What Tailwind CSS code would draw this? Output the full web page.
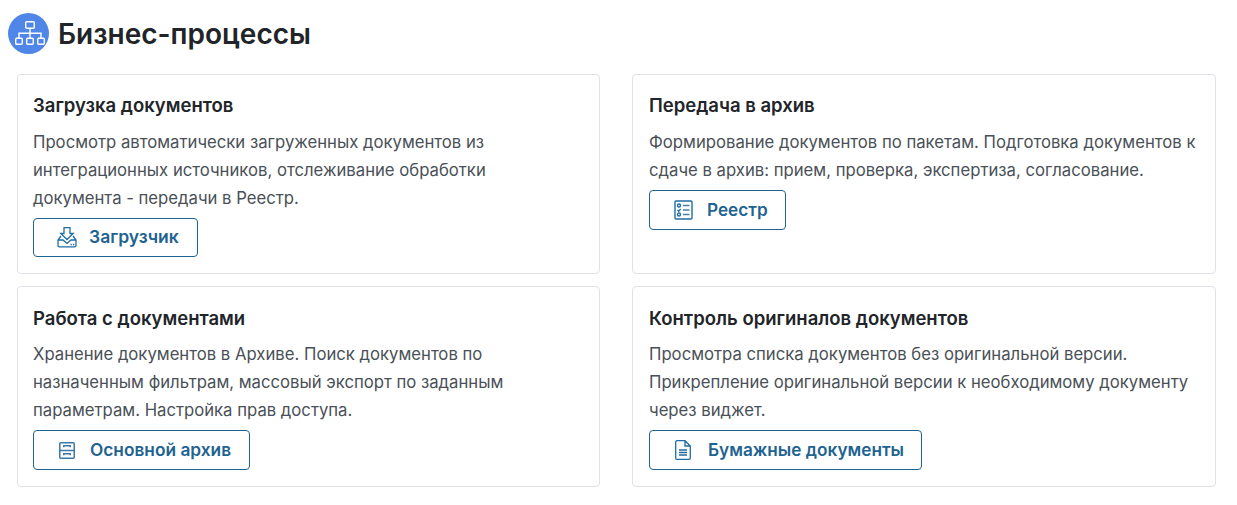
<!DOCTYPE html>
<html lang="ru"><head><meta charset="utf-8"><script src="https://cdn.jsdelivr.net/npm/@tailwindcss/browser@4"></script></head>
<body class="bg-white font-['Inter','Noto_Sans',sans-serif] text-[#212529] w-[1237px] h-[505px] overflow-hidden">
<div class="flex items-center gap-[9px] pl-[8px] pt-[13px] h-[54px]">
<div class="w-[41px] h-[41px] rounded-full bg-[#4f86e7] flex items-center justify-center">
<svg width="32" height="26" viewBox="-2 0 32 26" fill="none" stroke="#fff" stroke-width="1.4"><rect x="10.700" y="0.700" width="8.600" height="6.600" rx="1"/><rect x="0.700" y="17.200" width="6.600" height="6.100" rx="1"/><rect x="11.700" y="17.200" width="6.600" height="6.100" rx="1"/><rect x="22.700" y="17.200" width="6.600" height="6.100" rx="1"/><path d="M15 7.300v9.900M4 17.200v-5h22v5"/></svg></div>
<h1 class="text-[28px] font-[580] leading-[40px]">Бизнес-процессы</h1></div>
<div class="grid grid-cols-[583px_584px] grid-rows-[200px_201px] gap-x-[32px] gap-y-[12px] ml-[17px] mt-[20px]">
<section class="border border-[#dee2e6] rounded-[4px] pl-[15px] pr-[16px] pt-[19px]"><h2 class="text-[18.500px] font-[580] leading-[22px]">Загрузка документов</h2><p class="mt-[12px] max-w-[500px] text-[16.700px] leading-[28px] text-[#495057]">Просмотр автоматически загруженных документов из интеграционных источников, отслеживание обработки документа - передачи в Реестр.</p><a class="mt-[6px] inline-flex items-center h-[39px] pl-[23px] pr-[18px] gap-[12px] border border-[#1f6391] rounded-[4px] text-[#1f6391] font-semibold text-[17.500px]"><svg width="20" height="21" viewBox="0 0 20 21" fill="none" stroke="#1f6ea3" stroke-width="1.300"><path d="M7 .700h6v5.800h3.200L10 12.500 3.800 6.500H7zM4 9 1 13v5.500a1.300 1.300 0 0 0 1.300 1.300h15.400a1.300 1.300 0 0 0 1.300-1.300V13l-3-4M1 13h5l4 3.500 4-3.500h5"/><path d="M13.500 17.500h1.300M16 17.500h1.300"/></svg>Загрузчик</a></section>
<section class="border border-[#dee2e6] rounded-[4px] pl-[16px] pr-[16px] pt-[19px]"><h2 class="text-[18.500px] font-[580] leading-[22px]">Передача в архив</h2><p class="mt-[12px] text-[16.700px] leading-[28px] text-[#495057]">Формирование документов по пакетам. Подготовка документов к сдаче в архив: прием, проверка, экспертиза, согласование.</p><a class="mt-[6px] inline-flex items-center h-[40px] pl-[24px] pr-[17px] gap-[14px] border border-[#1f6391] rounded-[4px] text-[#1f6391] font-semibold text-[17.200px]"><svg width="19" height="20" viewBox="0 0 19 20" fill="none" stroke="#1f6ea3" stroke-width="1.400"><rect x="1" y="1" width="17" height="18" rx="1"/><circle cx="5" cy="5.500" r="1.500"/><circle cx="5" cy="14.500" r="1.500"/><path d="M3.500 10l1.200 1.200L6.700 9"/><path d="M9 5.500h6.500M9 10h6.500M9 14.500h6.500" stroke="#4a7fa8"/></svg>Реестр</a></section>
<section class="border border-[#dee2e6] rounded-[4px] pl-[15px] pr-[16px] pt-[20px]"><h2 class="text-[18.500px] font-[580] leading-[22px]">Работа с документами</h2><p class="mt-[11px] text-[16.700px] leading-[28px] text-[#495057]">Хранение документов в Архиве. Поиск документов по назначенным фильтрам, массовый экспорт по заданным параметрам. Настройка прав доступа.</p><a class="mt-[6px] inline-flex items-center h-[40px] pl-[25px] pr-[18px] gap-[15px] border border-[#1f6391] rounded-[4px] text-[#1f6391] font-semibold text-[17.300px]"><svg width="16" height="17" viewBox="0 0 16 17" fill="none" stroke="#3f78a8" stroke-width="1.500"><rect x="0.750" y="0.750" width="14.500" height="15.500" rx="1"/><path d="M0.750 8.500h14.500M4.800 5.200V3.800h6.400v1.400M4.800 13.200v-1.400h6.400v1.400"/></svg>Основной архив</a></section>
<section class="border border-[#dee2e6] rounded-[4px] pl-[16px] pr-[16px] pt-[20px]"><h2 class="text-[18.500px] font-[580] leading-[22px]">Контроль оригиналов документов</h2><p class="mt-[11px] text-[16.700px] leading-[28px] text-[#495057]">Просмотра списка документов без оригинальной версии. Прикрепление оригинальной версии к необходимому документу через виджет.</p><a class="mt-[6px] inline-flex items-center h-[40px] pl-[25px] pr-[17px] gap-[17px] border border-[#1f6391] rounded-[4px] text-[#1f6391] font-semibold text-[17.200px]"><svg width="16" height="20" viewBox="0 0 16 20" fill="none" stroke="#1f6ea3" stroke-width="1.300"><path d="M10 .700H2a1.300 1.300 0 0 0-1.300 1.300v16A1.300 1.300 0 0 0 2 19.300h12a1.300 1.300 0 0 0 1.300-1.300V6zM10 .700V6h5.300M4 10h8M4 12.500h8M4 15h8"/></svg>Бумажные документы</a></section>
</div></body></html>
